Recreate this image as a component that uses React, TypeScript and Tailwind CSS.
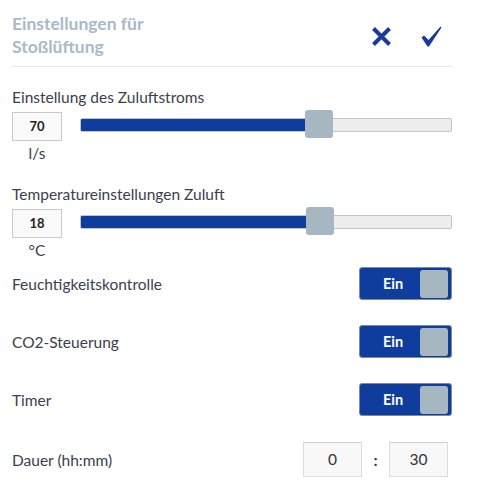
import React from "react";

const font = { fontFamily: "Lato, 'Liberation Sans', sans-serif" };

function Slider({ thumb }: { thumb: number }) {
  return (
    <div className="relative ml-[18px] flex-1 h-[28px]">
      <div className="absolute left-0 right-0 top-[8px] h-[14px] rounded-[2px] border border-[#c4c4c4] bg-[#ededed] overflow-hidden">
        <div className="h-full bg-[#0f3d9e]" style={{ width: thumb + 2 }} />
      </div>
      <div
        className="absolute top-0 h-[28px] w-[28px] rounded-[3px] bg-[#a6b7c2]"
        style={{ left: thumb }}
      />
    </div>
  );
}

function SliderSection({
  label,
  value,
  unit,
  thumb,
}: {
  label: string;
  value: string;
  unit: string;
  thumb: number;
}) {
  return (
    <div className="flex flex-col">
      <div className="text-[15.5px] leading-[20px] text-[#3b404c]">{label}</div>
      <div className="mt-[3px] flex items-start">
        <div className="flex w-[50px] flex-col items-center mt-[2px]">
          <div className="flex h-[29px] w-[50px] items-center justify-center border border-[#c9c9c9] bg-[#fafafa] text-[13px] font-bold text-[#222]">
            {value}
          </div>
          <div className="mt-[2px] text-[15.5px] leading-[20px] text-[#3b404c]">{unit}</div>
        </div>
        <Slider thumb={thumb} />
      </div>
    </div>
  );
}

function Toggle() {
  return (
    <div className="flex h-[33px] w-[93px] items-center rounded-[3px] border border-[#7d8aa6] bg-[#0f3d9e]">
      <div className="flex-1 pl-[6px] text-center text-[14.5px] font-bold text-white">Ein</div>
      <div className="mr-[3px] h-[28px] w-[28px] rounded-[3px] bg-[#a6b7c2]" />
    </div>
  );
}

function ToggleRow({ label }: { label: string }) {
  return (
    <div className="flex h-[33px] items-center justify-between">
      <div className="text-[15.5px] leading-[20px] text-[#3b404c]">{label}</div>
      <Toggle />
    </div>
  );
}

export default function App() {
  return (
    <div className="min-h-[502px] w-[481px] bg-white" style={font}>
      <div className="ml-[12px] w-[440px]">
        <div className="flex items-start justify-between border-b border-[#e6e8eb] pt-[12px] pb-[8px]">
          <div className="text-[17.5px] font-bold leading-[23px] text-[#a9bac6]">
            Einstellungen für
            <br />
            Stoßlüftung
          </div>
          <div className="mt-[14px] mr-[10px] flex items-center gap-[29px]">
            <svg width="21" height="21" viewBox="0 0 21 21">
              <path d="M2.5 2.5 L18.5 18.5 M18.5 2.5 L2.5 18.5" stroke="#1a3b96" strokeWidth="4" strokeLinecap="butt" />
            </svg>
            <svg width="21" height="21" viewBox="0 0 21 21">
              <path d="M0.5 11.5 L3 9.5 L7.5 14 L19.5 0.5 L20.5 1.5 L8 20.5 L6.5 20.5 Z" fill="#1a3b96" />
            </svg>
          </div>
        </div>

        <div className="mt-[20px]">
          <SliderSection label="Einstellung des Zuluftstroms" value="70" unit="l/s" thumb={225} />
        </div>
        <div className="mt-[21px]">
          <SliderSection label="Temperatureinstellungen Zuluft" value="18" unit="°C" thumb={226} />
        </div>

        <div className="mt-[7px] flex flex-col gap-[25px]">
          <ToggleRow label="Feuchtigkeitskontrolle" />
          <ToggleRow label="CO2-Steuerung" />
          <ToggleRow label="Timer" />
        </div>

        <div className="mt-[26px] flex h-[35px] items-center justify-between">
          <div className="text-[15.5px] leading-[20px] text-[#3b404c]">Dauer (hh:mm)</div>
          <div className="mr-[4px] flex items-center">
            <div className="flex h-[35px] w-[59px] items-center justify-center border border-[#dcdcdc] border-t-[#cfcfcf] bg-[#f8f8f8] text-[15.5px] text-[#333]">
              0
            </div>
            <div className="w-[27px] text-center text-[16px] font-bold text-[#333a4a]">:</div>
            <div className="flex h-[35px] w-[59px] items-center justify-center border border-[#dcdcdc] border-t-[#cfcfcf] bg-[#f8f8f8] text-[15.5px] text-[#333]">
              30
            </div>
          </div>
        </div>
      </div>
    </div>
  );
}
